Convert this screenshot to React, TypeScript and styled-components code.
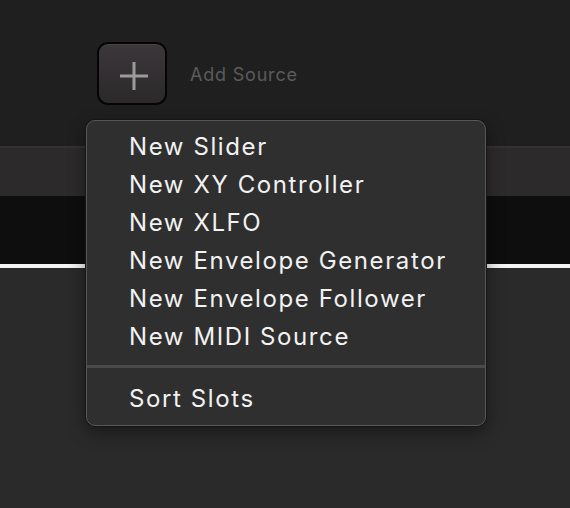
import React from "react";
import styled, { createGlobalStyle } from "styled-components";

const Global = createGlobalStyle`
  html, body { margin: 0; padding: 0; background: #2a2a2a; }
  body { font-family: Inter, "Noto Sans", sans-serif; }
`;

const Page = styled.div`
  position: relative;
  width: 570px;
  height: 508px;
  overflow: hidden;
  display: flex;
  flex-direction: column;
  background: #2a2a2a;
`;

const Header = styled.div`
  height: 146px;
  box-sizing: border-box;
  background: #1f1f1f;
  padding: 42px 0 0 97px;
`;

const Toolbar = styled.div`
  display: flex;
  align-items: center;
  gap: 23px;
`;

const AddButton = styled.button`
  width: 70px;
  height: 63px;
  box-sizing: border-box;
  border: 2px solid #050505;
  border-radius: 11px;
  background: linear-gradient(#3b373a, #2c292b);
  box-shadow: inset 0 1px 0 rgba(255, 255, 255, 0.06);
  display: flex;
  align-items: center;
  justify-content: center;
  padding: 4px 0 0 4px;
`;

const Label = styled.span`
  font-size: 18px;
  color: #5b5b5b;
  letter-spacing: 0.8px;
  margin-top: 2px;
`;

const SlotHeader = styled.div`
  height: 50px;
  border-top: 2px solid #363234;
  box-sizing: border-box;
  background: #2d2a2b;
`;

const SlotBody = styled.div`
  height: 68px;
  background: #0e0e0e;
  border-bottom: 4px solid #f4f4f4;
`;

const Rest = styled.div`
  flex: 1;
  background: #2a2a2a;
`;

const Menu = styled.div`
  position: absolute;
  left: 86px;
  top: 120px;
  width: 400px;
  height: 306px;
  box-sizing: border-box;
  background: #2f2f2f;
  border: 1px solid #575757;
  border-radius: 9px;
  box-shadow: 0 0 0 1px #161616, 0 6px 18px rgba(0, 0, 0, 0.45);
  padding: 7px 0 7px;
  display: flex;
  flex-direction: column;
`;

const Item = styled.div`
  height: 38px;
  line-height: 38px;
  padding-left: 42px;
  font-size: 24px;
  letter-spacing: 1.6px;
  color: #f2f2f2;
  white-space: nowrap;
`;

const Separator = styled.div`
  height: 3px;
  margin: 9px 0 12px;
  background: #4a4a4a;
`;

const items = [
  "New Slider",
  "New XY Controller",
  "New XLFO",
  "New Envelope Generator",
  "New Envelope Follower",
  "New MIDI Source",
];

export default function App() {
  return (
    <Page>
      <Global />
      <Header>
        <Toolbar>
          <AddButton aria-label="Add Source">
            <svg width="28" height="28" viewBox="0 0 28 28">
              <rect x="0" y="12.5" width="28" height="3" fill="#9b9b9b" />
              <rect x="12.5" y="0" width="3" height="28" fill="#9b9b9b" />
            </svg>
          </AddButton>
          <Label>Add Source</Label>
        </Toolbar>
      </Header>
      <SlotHeader />
      <SlotBody />
      <Rest />
      <Menu>
        {items.map((t) => (
          <Item key={t}>{t}</Item>
        ))}
        <Separator />
        <Item>Sort Slots</Item>
      </Menu>
    </Page>
  );
}
